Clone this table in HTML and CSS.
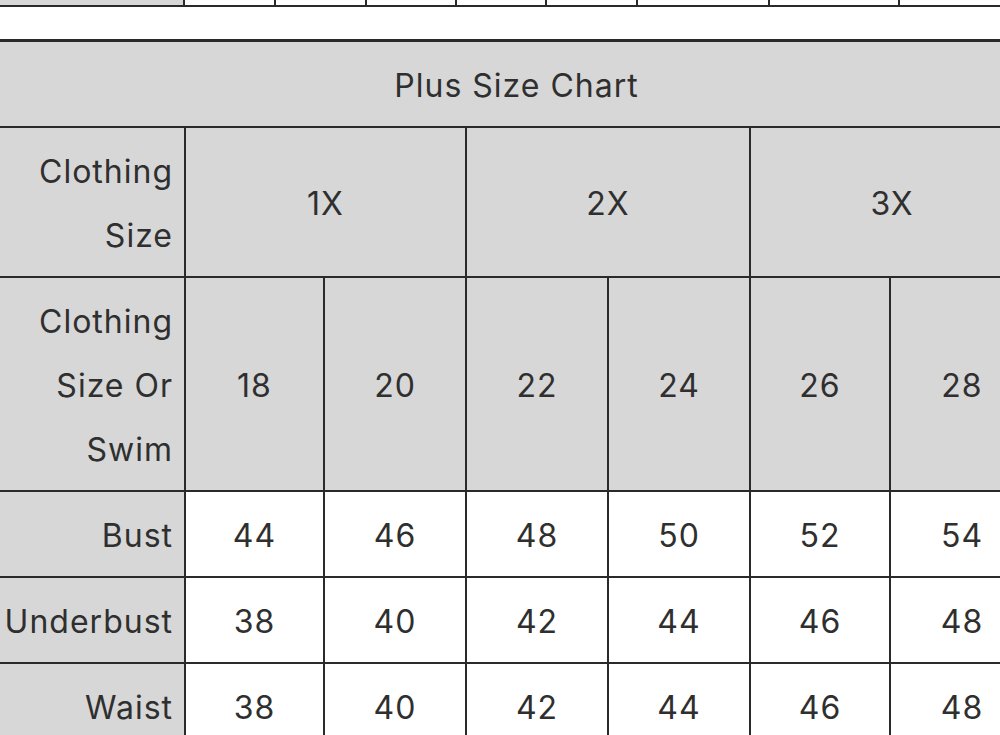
FILE: index.html
```html
<!DOCTYPE html>
<html>
<head>
<meta charset="utf-8">
<link rel="stylesheet" href="styles.css">
</head>
<body>
<table class="prev">
  <colgroup>
    <col class="p0"><col class="p1"><col class="p1"><col class="p2"><col class="p2"><col class="p1"><col class="p3"><col class="p4"><col class="p4">
  </colgroup>
  <tr>
    <td class="lbl"></td><td></td><td></td><td></td><td></td><td></td><td></td><td></td><td></td>
  </tr>
</table>
<table class="chart">
  <colgroup>
    <col class="c-label"><col class="c1"><col class="c2"><col class="c3"><col class="c4"><col class="c5"><col class="c6">
  </colgroup>
  <tr class="hdr">
    <td colspan="7" class="title">Plus Size Chart</td>
  </tr>
  <tr class="hdr">
    <td class="lbl">Clothing<br>Size</td>
    <td colspan="2">1X</td>
    <td colspan="2">2X</td>
    <td colspan="2">3X</td>
  </tr>
  <tr class="hdr">
    <td class="lbl">Clothing<br>Size Or<br>Swim</td>
    <td>18</td><td>20</td><td>22</td><td>24</td><td>26</td><td>28</td>
  </tr>
  <tr class="data">
    <td class="lbl">Bust</td>
    <td>44</td><td>46</td><td>48</td><td>50</td><td>52</td><td>54</td>
  </tr>
  <tr class="data">
    <td class="lbl">Underbust</td>
    <td>38</td><td>40</td><td>42</td><td>44</td><td>46</td><td>48</td>
  </tr>
  <tr class="data">
    <td class="lbl">Waist</td>
    <td>38</td><td>40</td><td>42</td><td>44</td><td>46</td><td>48</td>
  </tr>
</table>
</body>
</html>
```
FILE: styles.css
```css
html, body {
  margin: 0;
  padding: 0;
  background: #ffffff;
  overflow: hidden;
}
body {
  font-family: Inter, "Noto Sans", "Liberation Sans", sans-serif;
  color: #2f2f2f;
}
table {
  border-collapse: collapse;
  table-layout: fixed;
  margin-left: -2px;
}
.prev {
  width: 1030px;
}
.prev td {
  height: 5px;
  padding: 0;
  border: 2px solid #2a2a2a;
  border-top: none;
  background: #ffffff;
}
.prev td.lbl {
  background: #d7d7d7;
}
.prev .p0 { width: 185px; }
.prev .p1 { width: 91px; }
.prev .p2 { width: 90px; }
.prev .p3 { width: 132px; }
.prev .p4 { width: 130px; }

.chart {
  margin-top: 32px;
  width: 1035px;
  font-size: 32px;
  letter-spacing: 1px;
}
.chart .c-label { width: 186px; }
.chart .c1 { width: 139px; }
.chart .c2 { width: 142px; }
.chart .c3 { width: 142px; }
.chart .c4 { width: 142px; }
.chart .c5 { width: 140px; }
.chart .c6 { width: 144px; }
.chart td {
  border: 2px solid #2a2a2a;
  padding: 12px 0 8px;
  line-height: 64px;
  text-align: center;
  vertical-align: middle;
  background: #ffffff;
  white-space: nowrap;
}
.chart tr:first-child td {
  border-top-width: 3px;
}
.chart .hdr td {
  background: #d7d7d7;
}
.chart td.lbl {
  background: #d7d7d7;
  text-align: right;
  padding-right: 11px;
}
```
